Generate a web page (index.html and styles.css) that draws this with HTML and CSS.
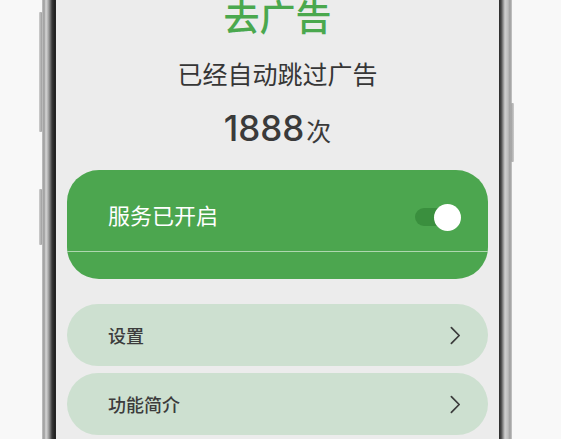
FILE: index.html
```html
<!DOCTYPE html>
<html lang="zh-CN">
<head>
  <meta charset="UTF-8" />
  <meta name="viewport" content="width=device-width, initial-scale=1.0"/>
  <title>去广告</title>
  <link rel="stylesheet" href="styles.css">
</head>
<body>
  <div class="phone">
    <span class="side-btn btn-top"></span>
    <span class="side-btn btn-mid"></span>
    <span class="side-btn btn-right"></span>

    <div class="screen">
      <h1 class="title">去广告</h1>
      <p class="subtitle">已经自动跳过广告</p>
      <p class="count"><span class="num">1888</span><span class="unit">次</span></p>

      <div class="service">
        <div class="service-row">
          <span class="service-label">服务已开启</span>
          <span class="switch"></span>
        </div>
        <div class="service-line"></div>
      </div>

      <div class="menu">
        <div class="menu-item">
          <span>设置</span>
          <svg class="chevron" viewBox="0 0 12 20" width="11" height="19">
            <path d="M1.5 1.5 L10 10 L1.5 18.5" fill="none" stroke="#3b3b3b" stroke-width="1.9" stroke-linecap="round" stroke-linejoin="round"/>
          </svg>
        </div>
        <div class="menu-item">
          <span>功能简介</span>
          <svg class="chevron" viewBox="0 0 12 20" width="11" height="19">
            <path d="M1.5 1.5 L10 10 L1.5 18.5" fill="none" stroke="#3b3b3b" stroke-width="1.9" stroke-linecap="round" stroke-linejoin="round"/>
          </svg>
        </div>
      </div>
    </div>
  </div>
</body>
</html>
```

FILE: styles.css
```css
html, body {
  margin: 0;
  height: 100%;
  overflow: hidden;
}

body {
  background: #f8f8f8;
  font-family: "Noto Sans CJK SC", "Noto Sans", sans-serif;
}

/* phone frame */
.phone {
  position: relative;
  margin-left: 42px;
  width: 470px;
  height: 470px;
  padding: 0 13px 0 14px;
  box-sizing: border-box;
  background: linear-gradient(to right,
    #c4c4c4 0px, #9a9a9a 2px, #d6d6d6 4px, #b0b0b0 6px,
    #7a7a7a 8px, #3a3a3a 10px, #1e1e1e 13px, #2a2a2a 14px,
    #2a2a2a calc(100% - 13px), #444 calc(100% - 11px),
    #8c8c8c calc(100% - 9px), #cfcfcf calc(100% - 7px),
    #bdbdbd calc(100% - 4px), #9c9c9c calc(100% - 2px), #c8c8c8 100%);
}

.side-btn {
  position: absolute;
  width: 3px;
  background: linear-gradient(to right, #cfcfcf, #9d9d9d);
  border-radius: 1px;
}

.btn-top {
  left: -3px;
  top: 12px;
  height: 120px;
}

.btn-mid {
  left: -3px;
  top: 189px;
  height: 56px;
}

.btn-right {
  right: -2px;
  top: 103px;
  height: 59px;
  background: linear-gradient(to right, #a0a0a0, #cdcdcd);
}

.screen {
  height: 100%;
  background: #ececec;
  padding: 0 11px;
  text-align: center;
  overflow: hidden;
}

.title {
  margin: -3px 0 0;
  font-size: 36px;
  line-height: 36px;
  font-weight: 500;
  color: #4aa84e;
}

.subtitle {
  margin: 28px 0 0;
  font-size: 25px;
  line-height: 25px;
  color: #363636;
}

.count {
  margin: 24px 0 0;
  line-height: 36px;
  color: #3a3a3a;
}

.count .num {
  font-family: Inter, Roboto, sans-serif;
  font-size: 35px;
  font-weight: 500;
}

.count .unit {
  font-size: 25px;
  margin-left: 2px;
}

/* service card */
.service {
  margin-top: 18px;
  height: 109px;
  background: #4ca64f;
  border-radius: 32px;
  overflow: hidden;
  text-align: left;
}

.service-row {
  height: 81px;
  padding: 34px 27px 0 41px;
  box-sizing: border-box;
  display: flex;
  justify-content: space-between;
  align-items: flex-start;
}

.service-label {
  margin-top: -3px;
  font-size: 22px;
  line-height: 27px;
  color: #fff;
}

.switch {
  position: relative;
  width: 46px;
  height: 27px;
}

.switch::before {
  content: "";
  position: absolute;
  left: 0;
  top: 4px;
  width: 40px;
  height: 18px;
  border-radius: 9px;
  background: #3a8f3e;
}

.switch::after {
  content: "";
  position: absolute;
  right: 0;
  top: 0;
  width: 27px;
  height: 27px;
  border-radius: 50%;
  background: #fff;
}

.service-line {
  height: 1px;
  background: rgba(255, 255, 255, 0.55);
}

/* menu */
.menu {
  margin-top: 25px;
  display: flex;
  flex-direction: column;
  gap: 7px;
}

.menu-item {
  height: 62px;
  border-radius: 31px;
  background: #cde0d0;
  padding: 0 27px 0 41px;
  display: flex;
  align-items: center;
  justify-content: space-between;
  font-size: 18px;
  font-weight: 500;
  color: #3c3c3c;
}
```
